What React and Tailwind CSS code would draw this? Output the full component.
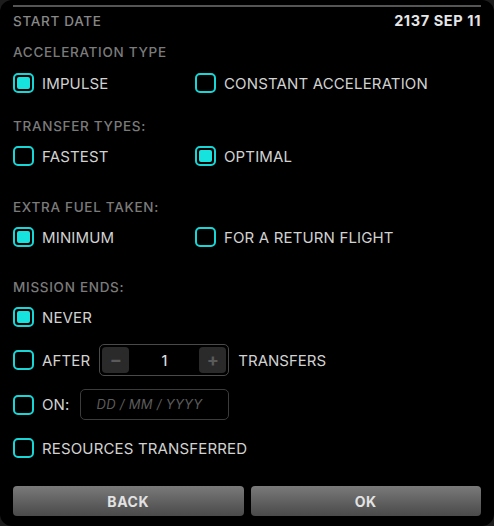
const FONT = "font-['Inter','Noto_Sans',sans-serif]";

function Check({ on }) {
  return (
    <div className="w-[21px] h-[20px] shrink-0 rounded-[5px] border-2 border-[#18d6d6] p-[2px]">
      {on && <div className="w-full h-full rounded-[2px] bg-[#17e3de]" />}
    </div>
  );
}

function Option({ on, label, wide }) {
  return (
    <div className={`flex items-center gap-[8px] ${wide ? "w-[182px]" : ""}`}>
      <Check on={on} />
      <span className="text-[15px] leading-none text-[#d2d2d2] tracking-[0.15px]">{label}</span>
    </div>
  );
}

function Header({ children, className = "" }) {
  return (
    <div className={`h-[20px] flex items-center text-[13.5px] font-medium tracking-[0.7px] text-[#7b7b7b] ${className}`}>
      {children}
    </div>
  );
}

export default function App() {
  return (
    <div className={`w-[494px] h-[526px] bg-[#1c1c1c] ${FONT}`}>
      <div className="w-full h-full bg-black rounded-[12px] px-[13px] pt-[5px]">
        <div className="h-[2px] bg-[#555]" />

        <div className="mt-[4px] h-[20px] flex items-center justify-between">
          <span className="text-[13.5px] font-medium tracking-[0.7px] text-[#888]">START DATE</span>
          <span className="text-[14.5px] font-bold tracking-[0.6px] text-[#e6e6e6]">2137 SEP 11</span>
        </div>

        <Header className="mt-[11px]">ACCELERATION TYPE</Header>
        <div className="mt-[11px] flex">
          <Option on wide label="IMPULSE" />
          <Option label="CONSTANT ACCELERATION" />
        </div>

        <Header className="mt-[23px]">TRANSFER TYPES:</Header>
        <div className="mt-[10px] flex">
          <Option wide label="FASTEST" />
          <Option on label="OPTIMAL" />
        </div>

        <Header className="mt-[31px]">EXTRA FUEL TAKEN:</Header>
        <div className="mt-[10px] flex">
          <Option on wide label="MINIMUM" />
          <Option label="FOR A RETURN FLIGHT" />
        </div>

        <Header className="mt-[30px]">MISSION ENDS:</Header>
        <div className="mt-[10px]">
          <Option on label="NEVER" />
        </div>

        <div className="mt-[17px] h-[32px] flex items-center">
          <Option label="AFTER" />
          <div className="ml-[9px] w-[130px] h-[32px] rounded-[5px] border-[1.5px] border-[#4a4a4a] p-[2px] flex items-center justify-between">
            <div className="w-[27px] h-full rounded-[4px] bg-[#2a2a2a] flex items-center justify-center text-[#5a5a5a] text-[18px] font-bold leading-none">−</div>
            <span className="text-[14px] text-[#dcdcdc] font-medium">1</span>
            <div className="w-[27px] h-full rounded-[4px] bg-[#2a2a2a] flex items-center justify-center text-[#5a5a5a] text-[18px] font-bold leading-none">+</div>
          </div>
          <span className="ml-[9px] text-[15px] leading-none text-[#d2d2d2]">TRANSFERS</span>
        </div>

        <div className="mt-[13px] h-[31px] flex items-center">
          <Option label="ON:" />
          <div className="ml-[10px] w-[149px] h-[31px] rounded-[5px] border border-[#3c3c3c] flex items-center pl-[16px]">
            <span className="text-[13px] italic text-[#5c5c5c] tracking-[0.3px]">DD / MM / YYYY</span>
          </div>
        </div>

        <div className="mt-[18px]">
          <Option label="RESOURCES TRANSFERRED" />
        </div>

        <div className="mt-[28px] flex gap-[7px]">
          <button className="flex-1 h-[30px] rounded-[4px] bg-gradient-to-b from-[#7a7a7a] to-[#4a4a4a] text-[14px] font-bold tracking-[0.6px] text-[#e2e2e2]">
            BACK
          </button>
          <button className="flex-1 h-[30px] rounded-[4px] bg-gradient-to-b from-[#7a7a7a] to-[#4a4a4a] text-[14px] font-bold tracking-[0.6px] text-[#e2e2e2]">
            OK
          </button>
        </div>
      </div>
    </div>
  );
}
